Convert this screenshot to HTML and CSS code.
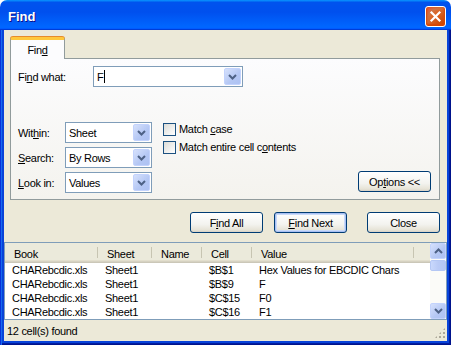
FILE: index.html
```html
<!DOCTYPE html>
<html>
<head>
<meta charset="utf-8">
<link rel="stylesheet" href="styles.css">
</head>
<body>
<div class="window">
  <div class="titlebar">
    <span class="title">Find</span>
    <span class="close"><svg width="13" height="13" viewBox="0 0 13 13"><path d="M2.5 2.5L10.5 10.5M10.5 2.5L2.5 10.5" stroke="#fff" stroke-width="2.2" stroke-linecap="square"/></svg></span>
  </div>
  <div class="frame">
    <div class="content">
      <div class="tabs"><div class="tab">Fin<u>d</u></div></div>
      <div class="panel">
        <div class="findrow">
          <span class="lbl-find">Fi<u>n</u>d what:</span>
          <div class="combo combo-find"><span class="text">F</span><span class="caret"></span><span class="dd"><svg width="9" height="6" viewBox="0 0 9 6"><path d="M1 1L4.5 4.5L8 1" fill="none" stroke="#4D6185" stroke-width="2"/></svg></span></div>
        </div>
        <div class="opts">
          <div class="selects">
            <span>Wit<u>h</u>in:</span>
            <div class="combo"><span class="text">Sheet</span><span class="dd"><svg width="9" height="6" viewBox="0 0 9 6"><path d="M1 1L4.5 4.5L8 1" fill="none" stroke="#4D6185" stroke-width="2"/></svg></span></div>
            <span><u>S</u>earch:</span>
            <div class="combo"><span class="text">By Rows</span><span class="dd"><svg width="9" height="6" viewBox="0 0 9 6"><path d="M1 1L4.5 4.5L8 1" fill="none" stroke="#4D6185" stroke-width="2"/></svg></span></div>
            <span><u>L</u>ook in:</span>
            <div class="combo"><span class="text">Values</span><span class="dd"><svg width="9" height="6" viewBox="0 0 9 6"><path d="M1 1L4.5 4.5L8 1" fill="none" stroke="#4D6185" stroke-width="2"/></svg></span></div>
          </div>
          <div class="checks">
            <div class="check"><span class="box"></span><span>Match <u>c</u>ase</span></div>
            <div class="check"><span class="box"></span><span>Match entire cell c<u>o</u>ntents</span></div>
          </div>
          <div class="btn btn-options"><span>Op<u>t</u>ions &lt;&lt;</span></div>
        </div>
      </div>
      <div class="actions">
        <div class="btn"><span>F<u>i</u>nd All</span></div>
        <div class="btn default"><span><u>F</u>ind Next</span></div>
        <div class="btn btn-close"><span>Close</span></div>
      </div>
      <div class="list">
        <div class="grid">
          <div class="row hdr">
            <span>Book</span><span>Sheet</span><span>Name</span><span>Cell</span><span>Value</span><span></span>
          </div>
          <div class="row"><span>CHARebcdic.xls</span><span>Sheet1</span><span></span><span>$B$1</span><span>Hex Values for EBCDIC Chars</span><span></span></div>
          <div class="row"><span>CHARebcdic.xls</span><span>Sheet1</span><span></span><span>$B$9</span><span>F</span><span></span></div>
          <div class="row"><span>CHARebcdic.xls</span><span>Sheet1</span><span></span><span>$C$15</span><span>F0</span><span></span></div>
          <div class="row"><span>CHARebcdic.xls</span><span>Sheet1</span><span></span><span>$C$16</span><span>F1</span><span></span></div>
        </div>
        <div class="scrollbar">
          <span class="sbtn"><svg width="9" height="6" viewBox="0 0 9 6"><path d="M1 5L4.5 1.5L8 5" fill="none" stroke="#4D6185" stroke-width="2"/></svg></span>
          <span class="thumb"></span>
          <span class="track"></span>
          <span class="sbtn"><svg width="9" height="6" viewBox="0 0 9 6"><path d="M1 1L4.5 4.5L8 1" fill="none" stroke="#4D6185" stroke-width="2"/></svg></span>
        </div>
      </div>
      <div class="status"><span class="stext">12 cell(s) found</span><span class="grip"></span></div>
    </div>
  </div>
</div>
</body>
</html>
```
FILE: styles.css
```css
* { box-sizing: border-box; }
body {
  margin: 0;
  background: #ffffff;
  font-family: "Liberation Sans", Arial, sans-serif;
  font-size: 11px;
  letter-spacing: -0.3px;
  color: #000;
}
u { text-decoration: underline; text-underline-offset: 1px; }

.window {
  width: 451px;
  height: 345px;
  display: flex;
  flex-direction: column;
}
.titlebar {
  height: 30px;
  flex: none;
  display: flex;
  align-items: center;
  justify-content: space-between;
  padding: 0 5px 0 8px;
  border-radius: 7px 7px 0 0;
  background: linear-gradient(180deg, #0997ff, #0053ee 8%, #0050ee 40%, #0066ff 88%, #0066ff 93%, #005bff 95%, #003dd7 96%, #003dd7);
}
.title {
  color: #fff;
  font-family: "Liberation Sans", Arial, sans-serif;
  font-weight: bold;
  font-size: 13px;
  letter-spacing: 0;
  text-shadow: 1px 1px #0f1089;
  margin-top: 2px;
}
.close {
  width: 21px;
  height: 21px;
  margin-top: 3px;
  border: 1px solid #fff;
  border-radius: 3px;
  display: flex;
  align-items: center;
  justify-content: center;
  background: radial-gradient(circle at 90% 90%, #cc4600 0%, #dc6527 55%, #cd7546 70%, #e2593a 90%, #e35d3f);
  box-shadow: inset 0 -1px 2px 1px #da4600;
}

.frame {
  flex: 1;
  padding: 0 4px 4px;
  background: #0843d9;
  box-shadow: inset 1px 0 #0831d9, inset 2px 0 #166aee, inset -1px -1px #00138c, inset -2px -2px #001ea0;
}
.content {
  height: 100%;
  background: #ece9d8;
  display: flex;
  flex-direction: column;
}

.tabs {
  display: flex;
  padding: 7px 0 0 6px;
}
.tab {
  width: 55px;
  height: 22px;
  margin-bottom: -1px;
  position: relative;
  z-index: 1;
  border: 1px solid #919b9c;
  border-bottom: none;
  border-top: 3px solid #ffc83c;
  border-radius: 3px 3px 0 0;
  background: #fcfcfe;
  text-align: center;
  padding-top: 4px;
  box-shadow: 0 -1px 0 #e68b2c;
}

.panel {
  margin-left: 6px;
  width: 430px;
  height: 142px;
  border: 1px solid #919b9c;
  background: linear-gradient(180deg, #fcfcfe, #f4f3ee);
  padding: 7px 8px 0 7px;
  display: flex;
  flex-direction: column;
}
.findrow {
  display: flex;
  align-items: center;
  height: 21px;
}
.lbl-find { width: 75px; }

.combo {
  height: 21px;
  border: 1px solid #7f9db9;
  background: #fff;
  display: flex;
  align-items: center;
  padding: 1px 1px 1px 3px;
}
.combo-find { width: 150px; }
.combo .text { flex: 1; }
.combo-find .text { flex: none; }
.caret {
  width: 1px;
  height: 13px;
  background: #000;
  margin-left: 1px;
  margin-right: auto;
}
.dd {
  width: 17px;
  height: 17px;
  flex: none;
  display: flex;
  align-items: center;
  justify-content: center;
  border: 1px solid #c3d3fd;
  border-radius: 2px;
  background: linear-gradient(135deg, #d6e1fc, #b4c7f4 60%, #aec2f3);
}

.opts {
  margin-top: 35px;
  display: flex;
  align-items: flex-start;
}
.selects {
  display: grid;
  grid-template-columns: 47px 87px;
  grid-auto-rows: 21px;
  row-gap: 4px;
  align-items: center;
}
.checks {
  margin-left: 11px;
  margin-top: -2px;
  display: flex;
  flex-direction: column;
}
.check {
  height: 18px;
  display: flex;
  align-items: center;
}
.box {
  width: 13px;
  height: 13px;
  border: 1px solid #1c5180;
  background: linear-gradient(135deg, #dcdcd7, #ffffff);
  margin-right: 3px;
}

.btn {
  height: 21px;
  width: 73px;
  border: 1px solid #003c74;
  border-radius: 3px;
  background: linear-gradient(180deg, #ffffff, #f3f3ef 60%, #e6e3d6 90%, #d6d0c5);
  display: flex;
  align-items: center;
  justify-content: center;
}
.btn-options {
  margin-left: auto;
  align-self: flex-end;
  margin-bottom: 1px;
}
.default {
  box-shadow: inset 0 0 0 1px #a9c0f3, inset 0 0 0 2px #c9daf8;
}

.actions {
  margin-top: 12px;
  display: flex;
  justify-content: flex-end;
  padding-right: 7px;
}
.actions .default { margin-left: 11px; }
.actions .btn-close { margin-left: 20px; }

.list {
  margin-top: 9px;
  height: 78px;
  border: 1px solid #7f9db9;
  background: #fff;
  display: flex;
}
.grid {
  flex: 1;
  display: flex;
  flex-direction: column;
}
.row {
  display: grid;
  grid-template-columns: 93px 54px 50px 50px 162px 1fr;
  height: 14px;
  align-items: center;
}
.row span {
  padding-left: 7px;
  white-space: nowrap;
}
.hdr {
  height: 20px;
  background: #ebeadb;
  box-shadow: inset 0 -1px #cbc7b8, inset 0 -2px #d6d2c2, inset 0 -3px #e2decd;
  padding-bottom: 1px;
}
.hdr span {
  padding-left: 9px;
  padding-top: 2px;
  height: 100%;
  display: flex;
  align-items: center;
  background: linear-gradient(#c7c5b2, #c7c5b2) right 4px / 1px 11px no-repeat;
}
.hdr span:last-child { background: none; }

.scrollbar {
  width: 16px;
  display: flex;
  flex-direction: column;
  background: #fbfbf8;
}
.sbtn {
  height: 16px;
  border: 1px solid #c3d3fd;
  border-radius: 2px;
  background: linear-gradient(135deg, #d6e1fc, #b4c7f4 60%, #aec2f3);
  display: flex;
  align-items: center;
  justify-content: center;
}
.thumb {
  height: 11px;
  margin-top: 1px;
  border: 1px solid #b4c7f4;
  border-radius: 2px;
  background: linear-gradient(90deg, #c9d8fc, #bacbf6 50%, #b4c7f4);
}
.track { flex: 1; }

.status {
  flex: 1;
  display: flex;
  align-items: center;
  padding-left: 3px;
}
.stext { flex: 1; }
.grip {
  align-self: flex-end;
  width: 12px;
  height: 12px;
  margin: 0 1px 2px 0;
  background: radial-gradient(circle, #aca899 1px, transparent 1.2px) 0 0 / 4px 4px;
  clip-path: polygon(100% 0, 100% 100%, 0 100%);
}
```
